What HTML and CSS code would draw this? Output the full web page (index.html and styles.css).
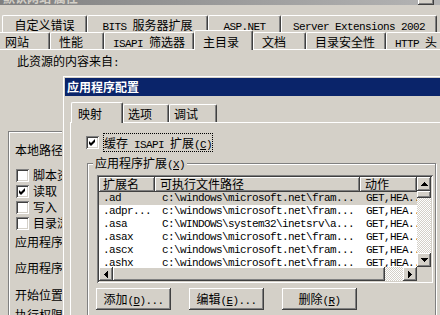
FILE: index.html
```html
<!DOCTYPE html>
<html lang="zh-CN">
<head>
    <meta charset="UTF-8">
    <title>应用程序配置</title>
    <link rel="stylesheet" href="styles.css">
</head>
<body>
    <!-- 背景の属性ウィンドウ -->
    <div class="props">
        <div class="props-title">
            <span class="props-caption">默认网站 属性</span>
            <span class="props-help"></span>
        </div>
        <div class="tabs tabs-back">
            <div class="tab">自定义错误</div>
            <div class="tab"><span class="m">BITS </span>服务器扩展</div>
            <div class="tab"><span class="m">ASP.NET</span></div>
            <div class="tab"><span class="m">Server Extensions 2002</span></div>
        </div>
        <div class="tabs tabs-front">
            <div class="tab">网站</div>
            <div class="tab">性能</div>
            <div class="tab"><span class="m">ISAPI </span>筛选器</div>
            <div class="tab active">主目录</div>
            <div class="tab">文档</div>
            <div class="tab">目录安全性</div>
            <div class="tab"><span class="m">HTTP </span>头</div>
        </div>
        <div class="props-page">
            <p class="src-label">此资源的内容来自<span class="m">:</span></p>
            <div class="radio-row"><span class="radio"></span>此计算机上的目录<span class="m">(D)</span></div>
            <div class="local-box">
                <p>本地路径<span class="m">(C):</span></p>
                <div class="checks">
                    <div class="check"><span class="box"></span>脚本资源访问<span class="m">(T)</span></div>
                    <div class="check"><span class="box"><svg width="13" height="13" viewBox="0 0 13 13"><polygon points="3,5 5,7 9,3 9,6 5,10 3,8"/></svg></span>读取<span class="m">(R)</span></div>
                    <div class="check"><span class="box"></span>写入<span class="m">(W)</span></div>
                    <div class="check"><span class="box"></span>目录浏览<span class="m">(B)</span></div>
                </div>
                <p class="app-caption">应用程序设置</p>
                <p class="app-row">应用程序名<span class="m">(M):</span></p>
                <p class="app-row">开始位置<span class="m">:</span></p>
                <p class="app-row last">执行权限<span class="m">(P):</span></p>
            </div>
        </div>
    </div>

    <!-- 应用程序配置ダイアログ -->
    <div class="dlg">
        <div class="dlg-title">应用程序配置</div>
        <div class="dtabs">
            <div class="dtab active">映射</div>
            <div class="dtab">选项</div>
            <div class="dtab">调试</div>
        </div>
        <div class="dpage">
            <div class="cache-row">
                <span class="box"><svg width="13" height="13" viewBox="0 0 13 13"><polygon points="3,5 5,7 9,3 9,6 5,10 3,8"/></svg></span>
                <span class="focus">缓存<span class="m"> ISAPI </span>扩展<span class="m">(<u>C</u>)</span></span>
            </div>
            <fieldset class="ext-group">
                <legend>应用程序扩展<span class="m">(<u>X</u>)</span></legend>
                <div class="list">
                    <div class="lv">
                        <div class="lv-head">
                            <div>扩展名</div>
                            <div>可执行文件路径</div>
                            <div>动作</div>
                        </div>
                        <div class="lv-row sel"><span>.ad</span><span>c:\windows\microsoft.net\fram...</span><span>GET,HEA...</span></div>
                        <div class="lv-row"><span>.adpr...</span><span>c:\windows\microsoft.net\fram...</span><span>GET,HEA...</span></div>
                        <div class="lv-row"><span>.asa</span><span>C:\WINDOWS\system32\inetsrv\a...</span><span>GET,HEA...</span></div>
                        <div class="lv-row"><span>.asax</span><span>c:\windows\microsoft.net\fram...</span><span>GET,HEA...</span></div>
                        <div class="lv-row"><span>.ascx</span><span>c:\windows\microsoft.net\fram...</span><span>GET,HEA...</span></div>
                        <div class="lv-row"><span>.ashx</span><span>c:\windows\microsoft.net\fram...</span><span>GET,HEA...</span></div>
                    </div>
                    <div class="vscroll">
                        <div class="sb-btn"><svg width="7" height="4" viewBox="0 0 7 4"><path d="M3 0h1v1h1v1h1v1h1v1h-7v-1h1v-1h1v-1h1z"/></svg></div>
                        <div class="sb-thumb"></div>
                        <div class="sb-track"></div>
                        <div class="sb-btn"><svg width="7" height="4" viewBox="0 0 7 4"><path d="M0 0h7v1h-1v1h-1v1h-1v1h-1v-1h-1v-1h-1v-1h-1z"/></svg></div>
                    </div>
                    <div class="hscroll">
                        <div class="sb-btn"><svg width="4" height="7" viewBox="0 0 4 7"><path d="M4 0v7h-1v-1h-1v-1h-1v-1h-1v-1h1v-1h1v-1h1v-1z"/></svg></div>
                        <div class="sb-thumb"></div>
                        <div class="sb-track"></div>
                        <div class="sb-btn"><svg width="4" height="7" viewBox="0 0 4 7"><path d="M0 0h1v1h1v1h1v1h1v1h-1v1h-1v1h-1v1h-1z"/></svg></div>
                    </div>
                    <div class="corner"></div>
                </div>
                <div class="btns">
                    <button class="btn">添加<span class="m">(<u>D</u>)...</span></button>
                    <button class="btn">编辑<span class="m">(<u>E</u>)...</span></button>
                    <button class="btn">删除<span class="m">(<u>R</u>)</span></button>
                </div>
            </fieldset>
        </div>
    </div>
</body>
</html>
```

FILE: styles.css
```css
* {
    box-sizing: border-box;
}
body {
    margin: 0;
    width: 440px;
    height: 315px;
    overflow: hidden;
    position: relative;
    background: #d4d0c8;
    color: #000;
    font-family: "Noto Sans CJK SC", sans-serif;
    font-size: 12px;
    line-height: 14px;
}
p {
    margin: 0;
}
.m {
    font-family: "Liberation Mono", monospace;
    font-size: 11px;
    line-height: 8px;
    letter-spacing: -0.6px;
}

/* background window */
.props-title {
    display: flex;
    justify-content: space-between;
    height: 5px;
    overflow: hidden;
    background: linear-gradient(to right, #808080, #b4b4b4);
}
.props-caption {
    margin-top: -9px;
    padding-left: 3px;
    color: #d4d0c8;
    font-weight: bold;
}
.props-help {
    width: 16px;
    height: 14px;
    margin: -9px 6px 0 0;
    background: #d4d0c8;
    box-shadow: inset -1px -1px #404040, inset 1px 1px #fff, inset -2px -2px #808080;
}
.tabs {
    display: grid;
    height: 17px;
}
.tabs-back {
    margin: 10px 0 0 2px;
    grid-template-columns: 85px 121px 73px 156px;
}
.tabs-front {
    margin-left: -4px;
    grid-template-columns: 54px 54px 90px 59px 53px 80px 60px;
}
.tab, .dtab {
    padding-top: 2px;
    border-top: 1px solid #fff;
    border-left: 1px solid #fff;
    border-right: 1px solid #404040;
    border-radius: 2px 2px 0 0;
    box-shadow: inset -1px 0 #808080;
    white-space: nowrap;
    overflow: hidden;
}
.tabs-back .tab {
    text-align: center;
}
.tabs-front .tab {
    padding-left: 8px;
}
.tab.active {
    margin: -2px 0 -1px;
    padding-top: 4px;
    position: relative;
    z-index: 1;
    background: #d4d0c8;
}
.props-page {
    border-top: 1px solid #fff;
}
.src-label {
    margin: 4px 0 0 17px;
}
.radio-row {
    display: flex;
    align-items: center;
    gap: 4px;
    height: 14px;
    margin: 6px 0 0 97px;
}
.radio {
    width: 12px;
    height: 12px;
    border-radius: 50%;
    background: #fff;
    box-shadow: inset 1px 1px #808080;
}
.local-box {
    width: 200px;
    height: 200px;
    margin: 43px 0 0 8px;
    padding: 11px 0 0 6px;
    border: 1px solid #808080;
    box-shadow: inset 1px 1px #fff;
    white-space: nowrap;
}
.checks {
    margin: 10px 0 0 1px;
}
.check {
    display: flex;
    align-items: center;
    gap: 4px;
    height: 16px;
}
.box {
    flex: none;
    width: 13px;
    height: 13px;
    background: #fff;
    box-shadow: inset 1px 1px #808080, inset -1px -1px #fff, inset 2px 2px #404040, inset -2px -2px #d4d0c8;
}
.box svg {
    display: block;
}
.app-caption {
    margin-top: 4px;
}
.app-row {
    margin-top: 12px;
}
.app-row + .app-row {
    margin-top: 13px;
}
.app-row.last {
    margin-top: 6px;
}

/* dialog */
.dlg {
    position: absolute;
    left: 62px;
    top: 75px;
    width: 400px;
    height: 260px;
    padding: 3px;
    background: #d4d0c8;
    box-shadow: inset 1px 1px #d4d0c8, inset 2px 2px #fff, inset -1px -1px #404040, inset -2px -2px #808080;
}
.dlg-title {
    height: 18px;
    padding-left: 2px;
    background: #0a246a;
    color: #fff;
    font-weight: bold;
    line-height: 18px;
}
.dtabs {
    display: grid;
    grid-template-columns: 52px 46px 48px;
    height: 18px;
    margin: 8px 0 0 6px;
}
.dtab {
    padding-left: 4px;
}
.dtab.active {
    margin: -2px 0 -1px;
    padding: 4px 0 0 6px;
    position: relative;
    z-index: 1;
    background: #d4d0c8;
}
.dpage {
    height: 220px;
    margin-left: 5px;
    padding: 10px 0 0 15px;
    border-top: 1px solid #fff;
    border-left: 1px solid #fff;
}
.cache-row {
    display: flex;
    align-items: center;
    gap: 4px;
}
.focus {
    padding: 1px 0;
    border: 1px dotted #000;
    line-height: 15px;
    white-space: nowrap;
}
.ext-group {
    width: 349px;
    min-width: 0;
    margin: 4px 0 0 1px;
    padding: 5px 0 8px 9px;
    border: 1px solid #808080;
    box-shadow: inset 1px 1px #fff, 1px 1px #fff;
}
.ext-group legend {
    margin-left: -4px;
    padding: 0 2px;
    background: #d4d0c8;
}
.list {
    display: grid;
    grid-template-columns: 318px 14px;
    grid-template-rows: 90px 14px;
    width: 336px;
    height: 108px;
    padding: 2px;
    background: #fff;
    box-shadow: inset 1px 1px #808080, inset -1px -1px #fff, inset 2px 2px #404040, inset -2px -2px #d4d0c8;
}
.lv {
    overflow: hidden;
}
.lv-head, .lv-row {
    display: grid;
    grid-template-columns: 56px 205px 57px;
    white-space: nowrap;
}
.lv-head {
    height: 15px;
}
.lv-head div {
    padding-left: 5px;
    overflow: hidden;
    background: #d4d0c8;
    box-shadow: inset -1px -1px #404040, inset 1px 1px #fff, inset -2px -2px #808080;
}
.lv-head div:first-child {
    padding-left: 4px;
}
.lv-row {
    height: 13px;
    line-height: 13px;
    font-family: "Liberation Mono", monospace;
    font-size: 11px;
    letter-spacing: -0.6px;
}
.lv-row span {
    padding-left: 7px;
    overflow: hidden;
}
.lv-row span:first-child {
    padding-left: 4px;
}
.lv-row span:last-child {
    padding-left: 6px;
}
.lv-row.sel {
    background: #d4d0c8;
}
.vscroll {
    display: grid;
    grid-template-rows: 14px 7px 1fr 14px;
}
.hscroll {
    display: grid;
    grid-template-columns: 14px 272px 1fr 14px;
}
.sb-btn {
    display: flex;
    align-items: center;
    justify-content: center;
}
.sb-btn, .sb-thumb, .btn {
    background: #d4d0c8;
    box-shadow: inset -1px -1px #404040, inset 1px 1px #fff, inset -2px -2px #808080, inset 2px 2px #d4d0c8;
}
.sb-track {
    background-color: #d4d0c8;
    background-image: conic-gradient(#fff 25%, transparent 0 50%, #fff 0 75%, transparent 0);
    background-size: 2px 2px;
}
.corner {
    background: #d4d0c8;
}
.btns {
    display: flex;
    gap: 18px;
    margin: 5px 0 0 -1px;
}
.btn {
    width: 75px;
    height: 22px;
    padding: 0;
    border: 0;
    color: #000;
    font: inherit;
    line-height: 22px;
}
```
